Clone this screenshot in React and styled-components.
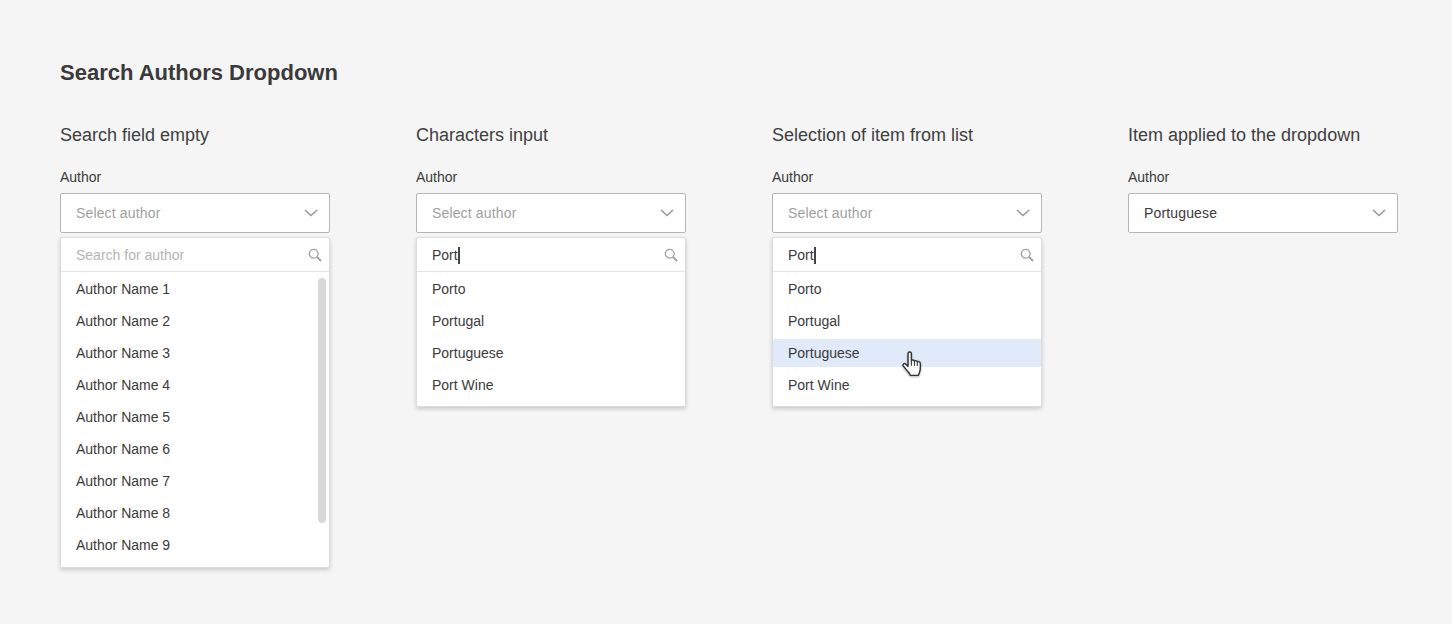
import React from 'react';
import styled, { createGlobalStyle } from 'styled-components';

const GlobalStyle = createGlobalStyle`
  html, body {
    margin: 0;
    padding: 0;
    background: #f5f5f5;
  }
  * {
    box-sizing: border-box;
  }
`;

const Page = styled.div`
  width: 1452px;
  height: 624px;
  padding: 60px 0 0 60px;
  background: #f5f5f5;
  color: #3a3a3a;
  font-family: 'Liberation Sans', Arial, sans-serif;
  overflow: hidden;
`;

const Title = styled.h1`
  margin: 0 0 40px;
  font-size: 22px;
  line-height: 25px;
  font-weight: bold;
  color: #3a3a3a;
`;

const Columns = styled.div`
  display: flex;
  gap: 86px;
`;

const Column = styled.section`
  width: 270px;
  flex: none;
`;

const ColumnTitle = styled.h2`
  margin: 0 0 24px;
  font-size: 18px;
  line-height: 20px;
  font-weight: normal;
  color: #3f3f3f;
  white-space: nowrap;
`;

const Label = styled.div`
  font-size: 14px;
  line-height: 16px;
  margin-bottom: 8px;
  color: #3a3a3a;
`;

const Select = styled.div`
  height: 40px;
  display: flex;
  align-items: center;
  justify-content: space-between;
  padding: 0 11px 0 15px;
  background: #fff;
  border: 1px solid #b5b5b5;
  border-radius: 2px;
  font-size: 14px;
  letter-spacing: 0.15px;
  color: ${(p) => (p.$filled ? '#3a3a3a' : '#a0a0a0')};
`;

const Panel = styled.div`
  position: relative;
  margin-top: 4px;
  background: #fff;
  border: 1px solid #dcdcdc;
  border-radius: 2px;
  box-shadow: 0 2px 4px rgba(0, 0, 0, 0.18);
`;

const SearchRow = styled.div`
  height: 34px;
  display: flex;
  align-items: center;
  justify-content: space-between;
  padding: 1px 7px 0 15px;
  border-bottom: 1px solid #e4e4e4;
  font-size: 14px;
  color: ${(p) => (p.$typed ? '#3a3a3a' : '#b5b5b5')};
`;

const Caret = styled.span`
  display: inline-block;
  width: 2px;
  height: 17px;
  margin-left: 0;
  background: #444;
  vertical-align: -4px;
`;

const List = styled.ul`
  list-style: none;
  margin: 0;
  padding: 3px 0 ${(p) => (p.$long ? '8px' : '7px')};
  display: flex;
  flex-direction: column;
  gap: 4px;
`;

const Item = styled.li`
  position: relative;
  height: 28px;
  line-height: 28px;
  padding-left: 15px;
  font-size: 14px;
  color: #3a3a3a;
  background: ${(p) => (p.$active ? '#e1eaf8' : 'transparent')};
`;

const Scrollbar = styled.div`
  position: absolute;
  top: 40px;
  right: 3px;
  width: 8px;
  height: 245px;
  border-radius: 4px;
  background: #d8d8d8;
`;

const HandCursor = styled.svg`
  position: absolute;
  left: 129px;
  top: 12px;
  filter: drop-shadow(0 1px 1px rgba(0, 0, 0, 0.3));
`;

const Chevron = () => (
  <svg width="14" height="8" viewBox="0 0 14 8" fill="none">
    <path d="M1 1l6 5.500L13 1" stroke="#979797" strokeWidth="1.5" />
  </svg>
);

const SearchIcon = () => (
  <svg width="14" height="14" viewBox="0 0 14 14" fill="none">
    <circle cx="5.7" cy="5.7" r="4.4" stroke="#a0a0a0" strokeWidth="1.3" />
    <path d="M9 9l4 4" stroke="#a0a0a0" strokeWidth="1.8" />
  </svg>
);

const Hand = () => (
  <HandCursor width="22" height="28" viewBox="0 0 20 25.500">
    <path
      d="M5.5 2.200c0-1.800 3-1.800 3 0v6.600c.3-1 2.600-.9 2.800.5.400-.9 2.500-.7 2.600.7.500-.7 2.600-.5 2.700 1 .2 2.700.2 5-.3 7.200-.3 1.500-.9 2.600-1.400 4H7.600c-.6-1.700-1.800-2.900-3-4.300L1.200 13.600c-.9-1.400.8-2.900 2-1.800l2.300 2.200z"
      fill="#fff"
      stroke="#333"
      strokeWidth="1.3"
      strokeLinejoin="round"
    />
    <path d="M8.500 9v4.500M11.300 9.500v4M13.900 10.300v3.400" stroke="#333" strokeWidth="1" />
  </HandCursor>
);

const authors = Array.from({ length: 9 }, (_, i) => `Author Name ${i + 1}`);
const matches = ['Porto', 'Portugal', 'Portuguese', 'Port Wine'];

const Dropdown = ({ title, value, typed, items, active, scroll }) => (
  <Column>
    <ColumnTitle>{title}</ColumnTitle>
    <Label>Author</Label>
    <Select $filled={!!value}>
      {value || 'Select author'}
      <Chevron />
    </Select>
    {items && (
      <Panel>
        <SearchRow $typed={!!typed}>
          <span>
            {typed || 'Search for author'}
            {typed && <Caret />}
          </span>
          <SearchIcon />
        </SearchRow>
        <List $long={scroll}>
          {items.map((item) => (
            <Item key={item} $active={item === active}>
              {item}
              {item === active && <Hand />}
            </Item>
          ))}
        </List>
        {scroll && <Scrollbar />}
      </Panel>
    )}
  </Column>
);

export default function App() {
  return (
    <Page>
      <GlobalStyle />
      <Title>Search Authors Dropdown</Title>
      <Columns>
        <Dropdown title="Search field empty" items={authors} scroll />
        <Dropdown title="Characters input" typed="Port" items={matches} />
        <Dropdown title="Selection of item from list" typed="Port" items={matches} active="Portuguese" />
        <Dropdown title="Item applied to the dropdown" value="Portuguese" />
      </Columns>
    </Page>
  );
}
